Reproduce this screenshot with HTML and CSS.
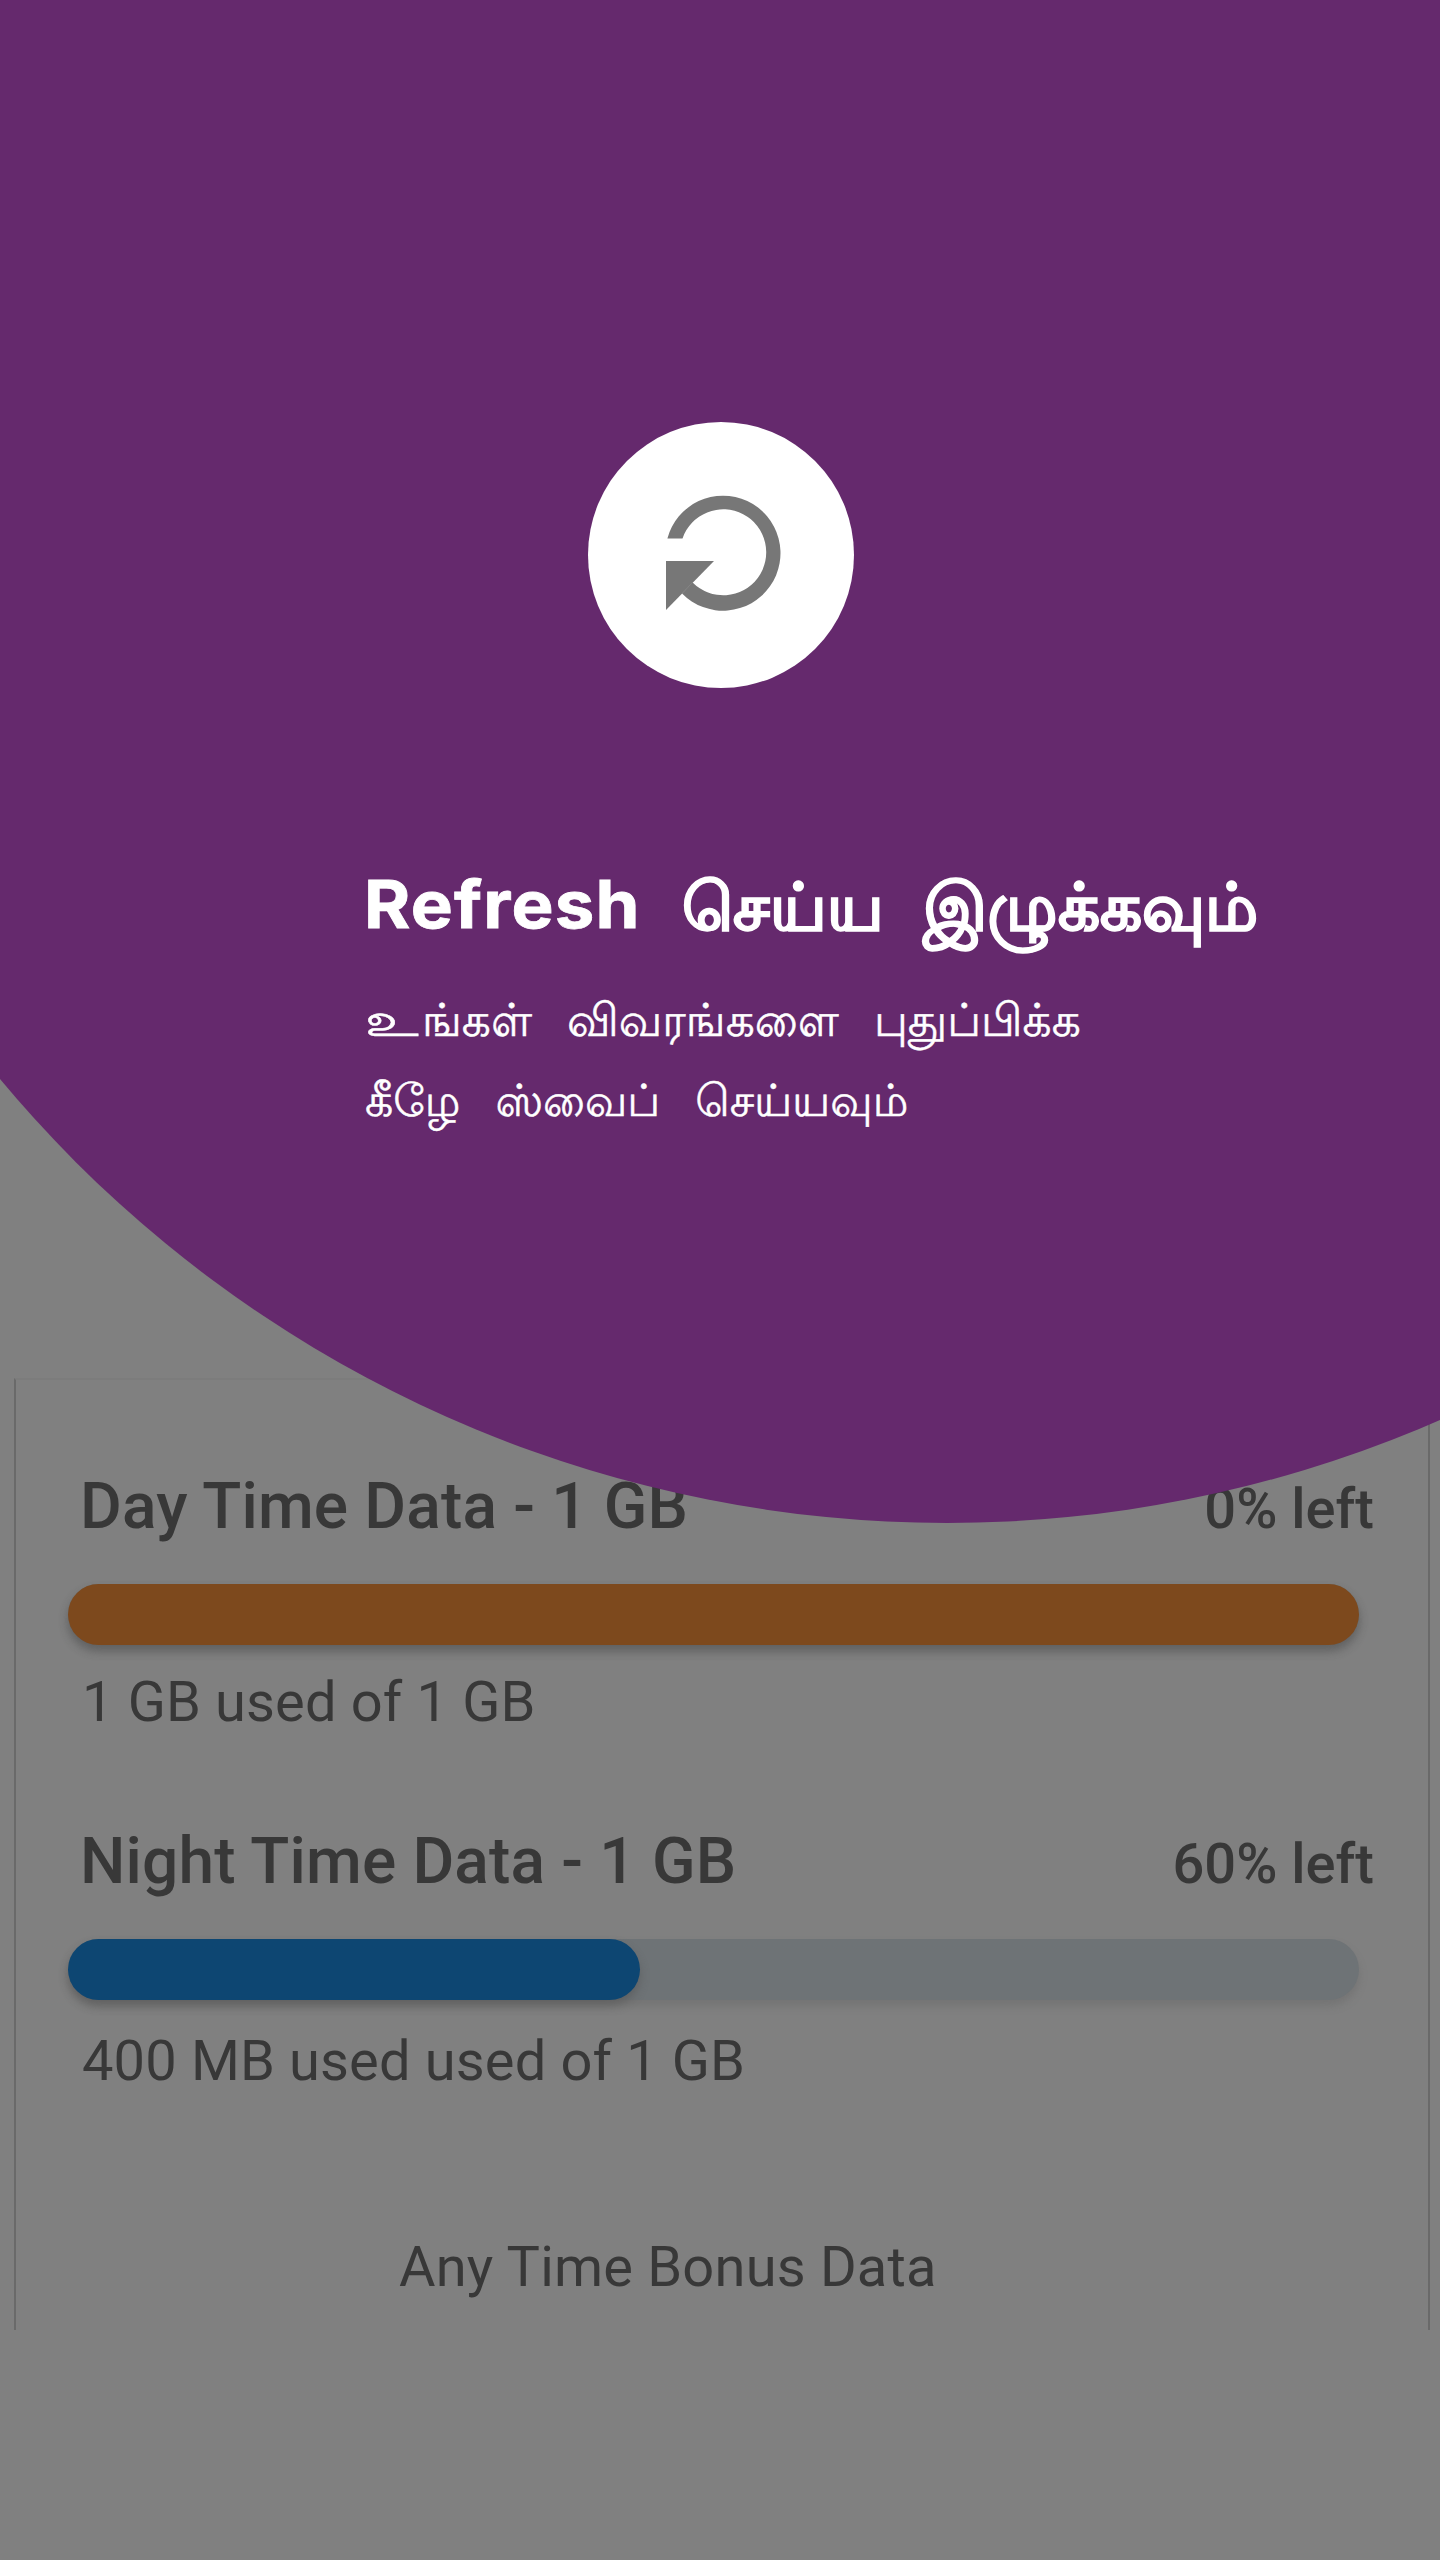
FILE: index.html
```html
<!DOCTYPE html>
<html lang="ta">
<head>
<meta charset="utf-8">
<title>Data usage</title>
<link rel="stylesheet" href="styles.css">
</head>
<body>
<main class="screen">
  <section class="card">
    <div class="usage">
      <div class="usage-head"><h2 class="plan">Day Time Data - 1 GB</h2><span class="left">0% left</span></div>
      <div class="track"><div class="fill fill-day" style="width:100%"></div></div>
      <p class="used">1 GB used of 1 GB</p>
    </div>
    <div class="usage usage-second">
      <div class="usage-head"><h2 class="plan">Night Time Data - 1 GB</h2><span class="left">60% left</span></div>
      <div class="track"><div class="fill fill-night" style="width:44.3%"></div></div>
      <p class="used">400 MB used used of 1 GB</p>
    </div>
    <p class="bonus">Any Time Bonus Data</p>
  </section>
  <section class="spotlight">
    <div class="disc"></div>
    <div class="coach">
      <div class="refresh">
        <svg class="refresh-icon" viewBox="-60 -60 120 120">
          <path d="M-55.6-14.5A57.5 57.5 0 1 1-41 40.5L-30.4 29.5A43 43 0 1 0-40.5-14.5Z"/>
          <path d="M-57 8H-9L-57 57Z"/>
        </svg>
      </div>
      <h1 class="title"><span class="latin">Refresh</span><span>செய்ய</span><span>இழுக்கவும்</span></h1>
      <p class="line line-one"><span><span class="wide">உ</span>ங்கள்</span><span>விவரங்களை</span><span>புதுப்பிக்க</span></p>
      <p class="line line-two"><span>கீழே</span><span>ஸ்வைப்</span><span>செய்யவும்</span></p>
    </div>
  </section>
</main>
</body>
</html>
```
FILE: styles.css
```css
* { box-sizing: border-box; }
body { margin: 0; background: #808080; color: #383838; font-family: Roboto, "Noto Sans", sans-serif; }
h1, h2, p { margin: 0; font-weight: 400; white-space: nowrap; }

.screen { position: relative; height: 2560px; padding: 1378px 10px 0 14px; overflow: hidden; }

.card { height: 952px; padding: 90px 54px 0 53px; border-left: 2px solid #6a6a6a; border-right: 2px solid #6a6a6a; border-top: 2px solid #7c7c7c; }
.usage { height: 355px; }
.usage-head { display: flex; justify-content: space-between; align-items: baseline; height: 74px; margin: 0 0 0 11px; line-height: 74px; }
.plan { font-size: 64px; font-weight: 500; letter-spacing: .17px; }
.left { font-size: 56px; font-weight: 500; }
.track { width: 1291px; height: 61px; margin: 40px 0 0 -1px; border-radius: 31px; background: #6e7376; box-shadow: 0 6px 8px rgba(90, 90, 90, .3); }
.fill { height: 61px; border-radius: 31px; box-shadow: 0 6px 10px rgba(70, 70, 70, .4); }
.fill-day { background: #7d491d; }
.fill-night { background: #0d4672; }
.used { margin: 24px 0 0 13px; font-size: 56px; line-height: 66px; letter-spacing: .15px; }
.usage-second .used { margin-top: 28px; }
.bonus { margin: 54px 0 0 330px; font-size: 56px; line-height: 66px; letter-spacing: .2px; }

.spotlight { position: absolute; inset: 0; overflow: hidden; color: #fff; }
.disc { position: absolute; left: -285px; top: -941px; width: 2464px; height: 2464px; border-radius: 50%; background: #65296d; }
.coach { position: relative; padding-top: 422px; }
.refresh { display: grid; place-items: center; width: 266px; height: 266px; margin-left: 588px; border-radius: 50%; background: #fff; }
.refresh-icon { width: 120px; height: 120px; margin: -4px 0 0 4px; fill: #777; }
.title { display: flex; gap: 39px; margin: 171px 0 0 364px; font-size: 66px; font-weight: 700; line-height: 90px; font-family: "Open Sans", "Noto Sans", sans-serif; -webkit-text-stroke: 1.2px #fff; }
.latin { width: 274px; margin-right: 5px; font-family: Inter, sans-serif; letter-spacing: 1.1px; transform: scaleX(1.07); transform-origin: left; -webkit-text-stroke: .8px #fff; }
.line { display: flex; margin-left: 365px; line-height: 80px; font-family: "Open Sans", "Noto Sans", sans-serif; text-rendering: geometricPrecision; -webkit-text-stroke: .5px #fff; }
.wide { display: inline-block; width: 57px; transform: scaleX(1.3); transform-origin: left; }
.line-one { gap: 35px; margin-top: 30px; font-size: 45.5px; }
.line-two { gap: 35px; font-size: 44.3px; }
```
